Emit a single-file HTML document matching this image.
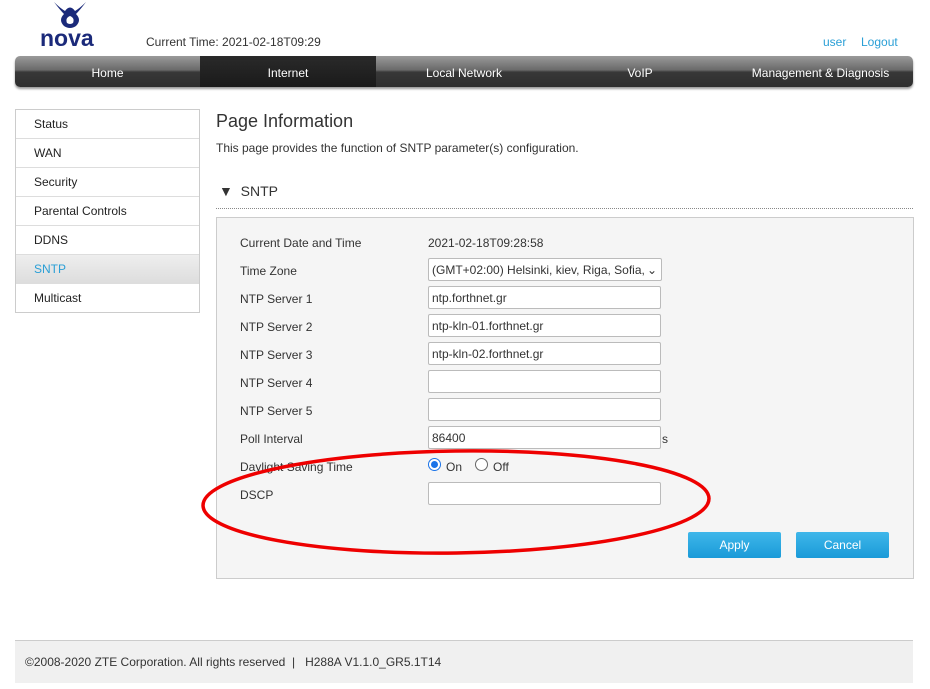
<!DOCTYPE html>
<html><head><style>
body{margin:0;width:930px;height:689px;background:#fff;font-family:"Liberation Sans",sans-serif;font-size:12px;color:#333;position:relative;overflow:hidden}
.abs{position:absolute}
.nav{left:15px;top:56px;width:898px;height:31px;border-radius:5px;background:linear-gradient(#9a9a9a 0,#6a6a6a 45%,#383838 52%,#2e2e2e 100%);box-shadow:0 2px 2px #999;overflow:hidden}
.nav div{position:absolute;top:2px;height:31px;line-height:31px;text-align:center;color:#fff;font-size:12px}
.side{left:15px;top:109px;width:183px;border:1px solid #ccc}
.side div{height:28px;line-height:28px;padding-left:18px;border-top:1px solid #ddd;font-size:12px;color:#222}
.side div:first-child{border-top:none}
.lbl{left:240px;font-size:12px;color:#333}
.inp{left:428px;width:233px;height:23px;border:1px solid #bbb;background:#fff;font-size:12px;line-height:22px;padding-left:3px;box-sizing:border-box;border-radius:2px}
.btn{top:532px;width:93px;height:26px;background:linear-gradient(#3fb7ea,#1a9ad8);color:#fff;text-align:center;line-height:26px;font-size:12px;border-radius:2px}
</style></head><body>
<svg class="abs" style="left:50px;top:0" width="40" height="30" viewBox="0 0 40 30"><path d="M4 2 Q10 10 14 14 Q8 20 14 26 Q20 30 26 26 Q32 20 26 14 Q30 10 36 2 Q30 8 25 11 Q20 4 15 11 Q10 8 4 2Z M20 16 Q25 18 23 23 Q20 25 17 23 Q15 18 20 16Z" fill="#1b2a7a" fill-rule="evenodd"/></svg>
<div class="abs" style="left:40px;top:25px;font-size:23px;font-weight:bold;color:#1b2a7a;letter-spacing:0">nova</div>
<div class="abs" style="left:146px;top:35px;font-size:12px">Current Time: 2021-02-18T09:29</div>
<div class="abs" style="left:823px;top:35px;color:#2a9fd6;font-size:12px">user</div>
<div class="abs" style="left:861px;top:35px;color:#2a9fd6;font-size:12px">Logout</div>
<div class="abs nav">
<div style="left:0;width:185px">Home</div>
<div style="left:185px;width:176px;top:0;height:31px;background:linear-gradient(#2a2a2a,#1a1a1a)"><span style="position:relative;top:2px">Internet</span></div>
<div style="left:361px;width:176px">Local Network</div>
<div style="left:537px;width:176px">VoIP</div>
<div style="left:713px;width:185px">Management &amp; Diagnosis</div>
</div>
<div class="abs side">
<div>Status</div><div>WAN</div><div>Security</div><div>Parental Controls</div><div>DDNS</div><div style="background:linear-gradient(#eee,#ddd);color:#2a9fd6">SNTP</div><div>Multicast</div>
</div>
<div class="abs" style="left:216px;top:111px;font-size:18px;color:#333">Page Information</div>
<div class="abs" style="left:216px;top:141px;font-size:12px">This page provides the function of SNTP parameter(s) configuration.</div>
<div class="abs" style="left:219px;top:183px;font-size:14px;color:#333">▼&nbsp;&nbsp;SNTP</div>
<div class="abs" style="left:216px;top:208px;width:697px;border-top:1px dotted #888"></div>
<div class="abs" style="left:216px;top:217px;width:696px;height:360px;background:#f5f5f5;border:1px solid #ccc"></div>
<div class="abs lbl" style="top:236px">Current Date and Time</div>
<div class="abs" style="left:428px;top:236px">2021-02-18T09:28:58</div>
<div class="abs lbl" style="top:264px">Time Zone</div>
<div class="abs inp" style="top:258px;width:234px">(GMT+02:00) Helsinki, kiev, Riga, Sofia,<span style="position:absolute;right:4px">⌄</span></div>
<div class="abs lbl" style="top:292px">NTP Server 1</div><div class="abs inp" style="top:286px">ntp.forthnet.gr</div>
<div class="abs lbl" style="top:320px">NTP Server 2</div><div class="abs inp" style="top:314px">ntp-kln-01.forthnet.gr</div>
<div class="abs lbl" style="top:348px">NTP Server 3</div><div class="abs inp" style="top:342px">ntp-kln-02.forthnet.gr</div>
<div class="abs lbl" style="top:376px">NTP Server 4</div><div class="abs inp" style="top:370px"></div>
<div class="abs lbl" style="top:404px">NTP Server 5</div><div class="abs inp" style="top:398px"></div>
<div class="abs lbl" style="top:432px">Poll Interval</div><div class="abs inp" style="top:426px">86400</div>
<div class="abs" style="left:662px;top:432px">s</div>
<div class="abs lbl" style="top:460px">Daylight Saving Time</div>
<div class="abs" style="left:428px;top:458px;width:11px;height:11px;border:1px solid #1a73e8;border-radius:50%;background:#fff"><div style="margin:2px;width:7px;height:7px;border-radius:50%;background:#1a73e8"></div></div>
<div class="abs" style="left:446px;top:460px">On</div>
<div class="abs" style="left:475px;top:458px;width:11px;height:11px;border:1px solid #666;border-radius:50%;background:#fff"></div>
<div class="abs" style="left:493px;top:460px">Off</div>
<div class="abs lbl" style="top:488px">DSCP</div><div class="abs inp" style="top:482px"></div>
<div class="abs btn" style="left:688px">Apply</div>
<div class="abs btn" style="left:796px">Cancel</div>
<svg class="abs" style="left:0;top:0" width="930" height="689"><ellipse cx="456" cy="502" rx="253" ry="51" fill="none" stroke="#e00" stroke-width="3.5" transform="rotate(-0.8 456 502)"/></svg>
<div class="abs" style="left:15px;top:640px;width:898px;height:42px;background:#f0f0f0;border-top:1px solid #ccc"></div>
<div class="abs" style="left:25px;top:655px;font-size:12px">©2008-2020 ZTE Corporation. All rights reserved &nbsp;|&nbsp;&nbsp; H288A V1.1.0_GR5.1T14</div>
</body></html>
